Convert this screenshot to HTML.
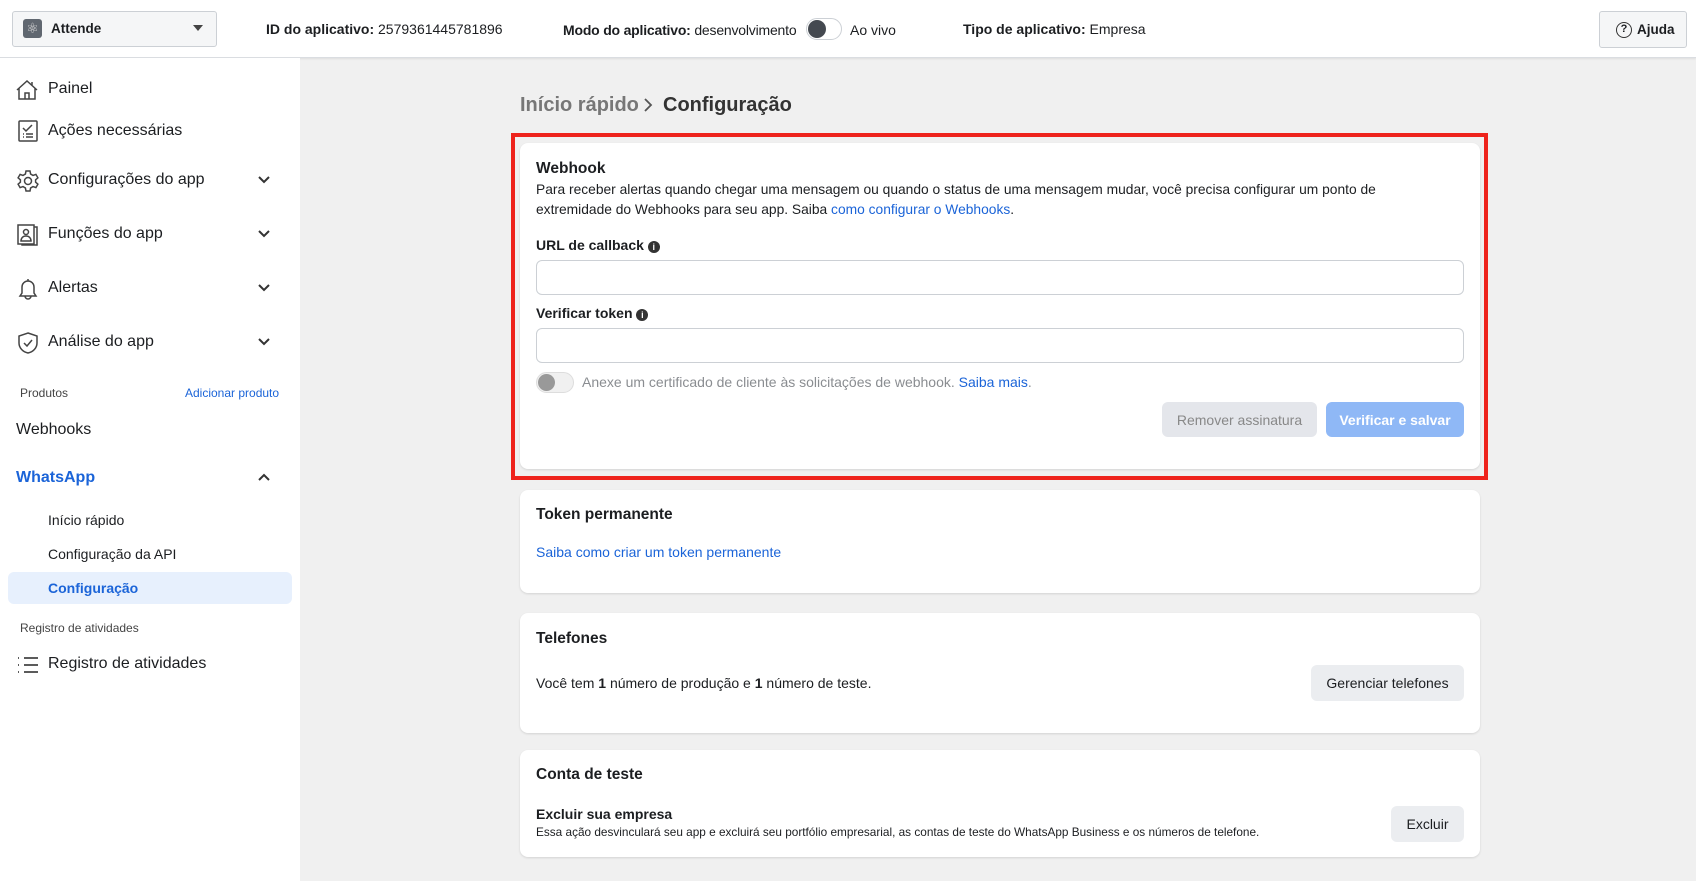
<!DOCTYPE html>
<html><head><meta charset="utf-8"><style>
*{box-sizing:border-box;margin:0;padding:0}
body{width:1696px;height:881px;overflow:hidden;background:#f0f0f0;font-family:"Liberation Sans",sans-serif;color:#1c1e21;position:relative}
.a{position:absolute;white-space:nowrap}
.top{position:absolute;left:0;top:0;width:1696px;height:58px;background:#fff;border-bottom:1px solid #dadde1;box-shadow:0 1px 2px rgba(0,0,0,.08)}
.side{position:absolute;left:0;top:58px;width:300px;height:823px;background:#fff}
.si{font-size:16px;color:#1c1e21}
.ic{position:absolute;width:24px;height:24px}
.chev{position:absolute;left:258px}
.card{position:absolute;left:520px;width:960px;background:#fff;border-radius:8px;box-shadow:0 1px 2px rgba(0,0,0,.12)}
.t{font-weight:bold;font-size:15.5px;color:#1c1e21}
.p{font-size:14px;color:#1c1e21}
.lk{color:#1b64d8}
.inp{position:absolute;left:536px;width:928px;height:35px;border:1px solid #ccd0d5;border-radius:6px;background:#fff}
.btn{position:absolute;border-radius:6px;font-size:14px;display:flex;align-items:center;justify-content:center}
</style></head><body>
<div class="top">
 <div class="a" style="left:12px;top:11px;width:205px;height:36px;border:1px solid #ccd0d5;border-radius:3px;background:#f5f6f7"></div>
 <div class="a" style="left:23px;top:19px;width:19px;height:19px;background:#606770;border-radius:3px;color:#ddd;font-size:14px;text-align:center;line-height:19px">⚛</div>
 <div class="a" style="left:51px;top:21px;font-size:13.5px;font-weight:bold">Attende</div>
 <div class="a" style="left:193px;top:25px;width:0;height:0;border-left:5px solid transparent;border-right:5px solid transparent;border-top:6px solid #444"></div>
 <div class="a" style="left:266px;top:21px;font-size:14px"><b>ID do aplicativo:</b> 2579361445781896</div>
 <div class="a" style="left:563px;top:22px;font-size:14px;letter-spacing:-0.2px"><b>Modo do aplicativo:</b> desenvolvimento</div>
 <div class="a" style="left:806px;top:18px;width:36px;height:22px;border:1px solid #ccd0d5;border-radius:11px;background:#fff"></div>
 <div class="a" style="left:808px;top:20px;width:18px;height:18px;border-radius:50%;background:#444950"></div>
 <div class="a" style="left:850px;top:22px;font-size:14px">Ao vivo</div>
 <div class="a" style="left:963px;top:21px;font-size:14px"><b>Tipo de aplicativo:</b> Empresa</div>
 <div class="a" style="left:1599px;top:11px;width:88px;height:37px;border:1px solid #ccd0d5;border-radius:3px;background:#f5f6f7"></div>
 <div class="a" style="left:1616px;top:22px;width:16px;height:16px;border:1.5px solid #333;border-radius:50%;font-size:11px;font-weight:bold;text-align:center;line-height:13px">?</div>
 <div class="a" style="left:1637px;top:22px;font-size:13.5px;font-weight:bold">Ajuda</div>
</div>
<div class="side">
 <svg class="ic" style="left:15px;top:20px" viewBox="0 0 24 24" fill="none" stroke="#444" stroke-width="1.5"><path d="M2 12L12 3l10 9M4 10v11h16V10M10 21v-6h4v6M17 4v3"/></svg>
 <div class="a si" style="left:48px;top:22px">Painel</div>
 <svg class="ic" style="left:16px;top:61px" viewBox="0 0 24 24" fill="none" stroke="#444" stroke-width="1.5"><rect x="3" y="2" width="18" height="20" rx="1"/><path d="M7 9l3 3 6-6M7 15h1M10 15h7M7 18h1M10 18h7"/></svg>
 <div class="a si" style="left:48px;top:64px">Ações necessárias</div>
 <svg class="ic" style="left:16px;top:111px" viewBox="0 0 24 24" fill="none" stroke="#444" stroke-width="1.5"><circle cx="12" cy="12" r="3.5"/><path d="M10 2h4l.6 3 2.4 1.4 2.9-1 2 3.4-2.3 2v2.4l2.3 2-2 3.4-2.9-1-2.4 1.4-.6 3h-4l-.6-3-2.4-1.4-2.9 1-2-3.4 2.3-2v-2.4l-2.3-2 2-3.4 2.9 1L9.4 5z"/></svg>
 <div class="a si" style="left:48px;top:113px">Configurações do app</div>
 <svg class="ic" style="left:16px;top:165px" viewBox="0 0 24 24" fill="none" stroke="#444" stroke-width="1.5"><rect x="2" y="2" width="16" height="19"/><path d="M18 4h3v18H6v-1"/><circle cx="10" cy="9" r="2.5"/><path d="M5 18c0-3 2-5 5-5s5 2 5 5z"/></svg>
 <div class="a si" style="left:48px;top:167px">Funções do app</div>
 <svg class="ic" style="left:16px;top:219px" viewBox="0 0 24 24" fill="none" stroke="#444" stroke-width="1.5"><path d="M12 2v2M6 16V10a6 6 0 0112 0v6l2 3H4zM9 19a3 3 0 006 0"/></svg>
 <div class="a si" style="left:48px;top:221px">Alertas</div>
 <svg class="ic" style="left:16px;top:273px" viewBox="0 0 24 24" fill="none" stroke="#444" stroke-width="1.5"><path d="M12 2l9 3v7c0 5-4 9-9 10-5-1-9-5-9-10V5z"/><path d="M8 12l3 3 5-6"/></svg>
 <div class="a si" style="left:48px;top:275px">Análise do app</div>
 <svg class="chev" style="top:118px" width="12" height="8" viewBox="0 0 12 8" fill="none" stroke="#333" stroke-width="2"><path d="M1 1l5 5 5-5"/></svg>
 <svg class="chev" style="top:172px" width="12" height="8" viewBox="0 0 12 8" fill="none" stroke="#333" stroke-width="2"><path d="M1 1l5 5 5-5"/></svg>
 <svg class="chev" style="top:226px" width="12" height="8" viewBox="0 0 12 8" fill="none" stroke="#333" stroke-width="2"><path d="M1 1l5 5 5-5"/></svg>
 <svg class="chev" style="top:280px" width="12" height="8" viewBox="0 0 12 8" fill="none" stroke="#333" stroke-width="2"><path d="M1 1l5 5 5-5"/></svg>
 <div class="a" style="left:20px;top:328px;font-size:12px;color:#444">Produtos</div>
 <div class="a lk" style="left:185px;top:328px;font-size:12px">Adicionar produto</div>
 <div class="a si" style="left:16px;top:363px">Webhooks</div>
 <div class="a" style="left:16px;top:411px;font-size:16px;font-weight:bold;color:#1b64d8">WhatsApp</div>
 <svg class="chev" style="top:415px" width="12" height="8" viewBox="0 0 12 8" fill="none" stroke="#333" stroke-width="2"><path d="M1 7l5-5 5 5"/></svg>
 <div class="a" style="left:48px;top:454px;font-size:14px">Início rápido</div>
 <div class="a" style="left:48px;top:488px;font-size:14px">Configuração da API</div>
 <div class="a" style="left:8px;top:514px;width:284px;height:32px;background:#e7f0fd;border-radius:6px"></div>
 <div class="a" style="left:48px;top:522px;font-size:14px;font-weight:bold;color:#1b64d8">Configuração</div>
 <div class="a" style="left:20px;top:563px;font-size:12px;color:#444">Registro de atividades</div>
 <svg class="ic" style="left:16px;top:595px" viewBox="0 0 24 24" fill="none" stroke="#444" stroke-width="1.8"><path d="M2 5h1M2 12h1M2 19h1M8 5h14M8 12h14M8 19h14"/></svg>
 <div class="a si" style="left:48px;top:597px">Registro de atividades</div>
</div>

<div class="a" style="left:520px;top:94px;font-size:20px;font-weight:bold;color:#777">Início rápido</div>
<svg class="a" style="left:643px;top:97px" width="10" height="16" viewBox="0 0 10 16" fill="none" stroke="#555" stroke-width="1.8"><path d="M2 2l6 6-6 6"/></svg>
<div class="a" style="left:663px;top:94px;font-size:20px;font-weight:bold;color:#333">Configuração</div>

<div class="a" style="left:511px;top:133px;width:977px;height:347px;border:4px solid #ee231c"></div>
<div class="card" style="top:143px;height:326px"></div>
<div class="a t" style="left:536px;top:160px">Webhook</div>
<div class="a p" style="left:536px;top:180px;line-height:20px;font-size:13.8px">Para receber alertas quando chegar uma mensagem ou quando o status de uma mensagem mudar, você precisa configurar um ponto de<br>extremidade do Webhooks para seu app. Saiba <span class="lk">como configurar o Webhooks</span>.</div>
<div class="a" style="left:536px;top:237px;font-size:14px;font-weight:bold">URL de callback <span style="display:inline-block;width:12px;height:12px;border-radius:50%;background:#333;color:#fff;font-size:9px;text-align:center;line-height:12px;vertical-align:0">i</span></div>
<div class="inp" style="top:260px"></div>
<div class="a" style="left:536px;top:305px;font-size:14px;font-weight:bold">Verificar token <span style="display:inline-block;width:12px;height:12px;border-radius:50%;background:#333;color:#fff;font-size:9px;text-align:center;line-height:12px;vertical-align:0">i</span></div>
<div class="inp" style="top:328px"></div>
<div class="a" style="left:536px;top:372px;width:38px;height:21px;border-radius:11px;background:#f0f0f0;border:1px solid #ddd"></div>
<div class="a" style="left:538px;top:374px;width:17px;height:17px;border-radius:50%;background:#999"></div>
<div class="a" style="left:582px;top:374px;font-size:14px;color:#8a8d91">Anexe um certificado de cliente às solicitações de webhook. <span class="lk">Saiba mais</span>.</div>
<div class="btn" style="left:1162px;top:402px;width:155px;height:35px;background:#e4e6eb;color:#888">Remover assinatura</div>
<div class="btn" style="left:1326px;top:402px;width:138px;height:35px;background:#8fb8f6;color:#fff;font-weight:bold">Verificar e salvar</div>

<div class="card" style="top:490px;height:103px"></div>
<div class="a t" style="left:536px;top:506px">Token permanente</div>
<div class="a p lk" style="left:536px;top:544px">Saiba como criar um token permanente</div>

<div class="card" style="top:613px;height:120px"></div>
<div class="a t" style="left:536px;top:630px">Telefones</div>
<div class="a p" style="left:536px;top:675px">Você tem <b>1</b> número de produção e <b>1</b> número de teste.</div>
<div class="btn" style="left:1311px;top:665px;width:153px;height:36px;background:#ebedf0;color:#1c1e21">Gerenciar telefones</div>

<div class="card" style="top:750px;height:107px"></div>
<div class="a t" style="left:536px;top:766px">Conta de teste</div>
<div class="a" style="left:536px;top:806px;font-size:14px;font-weight:bold">Excluir sua empresa</div>
<div class="a" style="left:536px;top:825px;font-size:11.8px">Essa ação desvinculará seu app e excluirá seu portfólio empresarial, as contas de teste do WhatsApp Business e os números de telefone.</div>
<div class="btn" style="left:1391px;top:806px;width:73px;height:36px;background:#ebedf0;color:#1c1e21">Excluir</div>
</body></html>
